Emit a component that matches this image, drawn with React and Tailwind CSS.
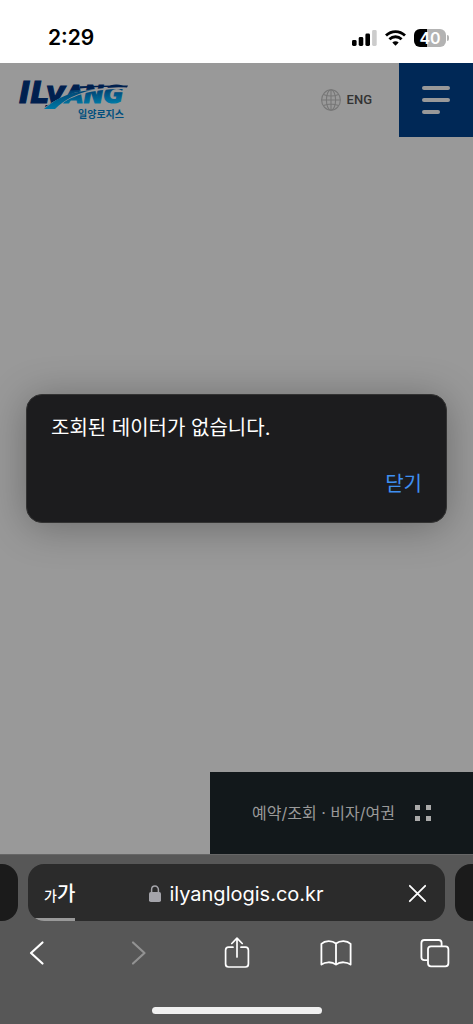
import { useState } from "react";

function Logo() {
  return (
    <svg
      width="112"
      height="44"
      viewBox="0 0 112 44"
      role="img"
      aria-label="ILyANG 일양로지스"
      fontWeight="bold"
    >
      <defs>
        <linearGradient id="letters" gradientUnits="userSpaceOnUse" x1="70" y1="6" x2="71" y2="25">
          <stop offset="0" stopColor="#00204f" />
          <stop offset="0.22" stopColor="#00204f" />
          <stop offset="0.26" stopColor="#003f70" />
          <stop offset="1" stopColor="#0078a4" />
        </linearGradient>
        <linearGradient id="wave" gradientUnits="userSpaceOnUse" x1="0" y1="10" x2="0" y2="30">
          <stop offset="0" stopColor="#00406f" />
          <stop offset="1" stopColor="#0078a4" />
        </linearGradient>
      </defs>
      <text
        x="1"
        y="24"
        fontSize="30"
        fontStyle="oblique"
        fontFamily="'DejaVu Sans', sans-serif"
        fill="#00204f"
        stroke="#00204f"
        strokeWidth="1.2"
      >
        ILy
        <tspan fontSize="24" fill="url(#letters)" stroke="url(#letters)">ANG</tspan>
      </text>
      <path d="M24 31C40 17 60 9 110 8V10C78 9 52 15 36 31Z" fill="#999" />
      <path d="M26 30C38 20 50 13 74 11C58 15 47 20 37 30Z" fill="url(#wave)" />
      <path d="M62 7.2C78 6.2 94 6.4 110 6.4L109 8.4C92 7.6 78 8 62 9.4Z" fill="#00204f" />
      <text x="60" y="39" fontSize="10" fill="#004f7e" fontFamily="'Noto Sans CJK KR', sans-serif">
        일양로지스
      </text>
    </svg>
  );
}

function StatusBar() {
  return (
    <div className="flex h-[63px] items-center justify-between bg-white pt-3 pr-6 pl-12 text-black">
      <span className="text-[21px] font-semibold">2:29</span>
      <div className="flex items-center gap-2">
        <svg width="25" height="16" viewBox="0 0 25 16">
          <rect x="0" y="10" width="4.6" height="6" rx="1.4" />
          <rect x="6.7" y="7" width="4.6" height="9" rx="1.4" />
          <rect x="13.4" y="3.5" width="4.6" height="12.5" rx="1.4" />
          <rect x="20.1" y="0" width="4.6" height="16" rx="1.4" fill="#ccc" />
        </svg>
        <svg width="21" height="16" viewBox="0 0 21 16" fill="none" stroke="#000" strokeWidth="2.8">
          <path d="M1 5.6C6.5 .2 14.5 .2 20 5.6" />
          <path d="M4.4 9.3C8 5.9 13 5.9 16.6 9.3" />
          <path d="M10.5 15.8L7.3 12.5C9.1 10.9 11.9 10.9 13.7 12.5Z" fill="#000" stroke="none" />
        </svg>
        <div className="flex items-center gap-px">
          <div className="flex h-[18px] w-8 items-center justify-center rounded-md bg-linear-to-r from-black from-40% to-[#b3b3b3] to-40% text-base font-semibold text-white">
            40
          </div>
          <div className="h-1.5 w-0.5 rounded-r-full bg-[#b3b3b3]" />
        </div>
      </div>
    </div>
  );
}

function SiteHeader() {
  return (
    <header className="flex items-start justify-between">
      <a href="#home" className="mt-4 ml-[18px]">
        <Logo />
      </a>
      <div className="flex">
        <a
          href="#eng"
          className="mr-[27px] flex items-center gap-1.5 font-[Roboto,sans-serif] text-[13px] font-medium text-[#333]"
        >
          <svg width="20" height="22" viewBox="0 0 20 22" fill="none" stroke="#777" strokeWidth="1.1">
            <ellipse cx="10" cy="11" rx="9.4" ry="10.2" />
            <ellipse cx="10" cy="11" rx="4.6" ry="10.2" />
            <path d="M10 .8V21.2M.6 11H19.4M2.4 5.4C7 7.4 13 7.4 17.6 5.4M2.4 16.6C7 14.6 13 14.6 17.6 16.6" />
          </svg>
          ENG
        </a>
        <button
          aria-label="메뉴"
          className="flex size-[74px] flex-col justify-center gap-2 bg-[#002856] pl-[23px]"
        >
          <span className="h-1 w-7 rounded-full bg-[#999]" />
          <span className="h-1 w-7 rounded-full bg-[#999]" />
          <span className="h-1 w-[18px] rounded-full bg-[#999]" />
        </button>
      </div>
    </header>
  );
}

function AlertDialog({ onClose }) {
  return (
    <div className="absolute inset-0 flex items-center justify-center px-[26px]">
      <div
        role="alertdialog"
        aria-labelledby="alert-message"
        className="flex w-full flex-col rounded-2xl border border-[#333] bg-[#1c1c1e] px-6 pt-4 pb-[21px] shadow-[0_4px_40px_rgba(0,0,0,0.3)]"
      >
        <p id="alert-message" className="text-xl leading-[34px] text-white">
          조회된 데이터가 없습니다.
        </p>
        <button onClick={onClose} className="mt-[22px] self-end text-xl leading-[34px] text-[#3f8ff0]">
          닫기
        </button>
      </div>
    </div>
  );
}

function BrowserBar() {
  return (
    <footer className="border-t border-[#666] bg-[#575757] pt-[9px] pb-2.5 text-white">
      {/* Address bar */}
      <div className="flex gap-2.5">
        <div className="w-[18px] rounded-r-2xl bg-[#1b1b1b]" />
        <div className="relative flex h-[57px] flex-1 items-center justify-between overflow-hidden rounded-2xl bg-[#2b2b2b] px-4 pt-0.5">
          <button aria-label="페이지 설정" className="flex w-8 items-baseline font-medium">
            <span className="text-sm">가</span>
            <span className="text-xl">가</span>
          </button>
          <a href="#address" className="flex items-center gap-2 text-xl">
            <svg width="12" height="17" viewBox="0 0 12 17">
              <path d="M2.6 8V4.6C2.6 -.1 9.4 -.1 9.4 4.6V8" fill="none" stroke="#a4a4aa" strokeWidth="1.5" />
              <rect x="0" y="7" width="12" height="10" rx="1.8" fill="#a4a4aa" />
            </svg>
            ilyanglogis.co.kr
          </a>
          <button aria-label="중지" className="flex w-8 justify-end">
            <svg width="21" height="19" viewBox="0 0 21 19" stroke="#fff" strokeWidth="1.8" strokeLinecap="round">
              <path d="M1.8 1.8L17.2 17.2M17.2 1.8L1.8 17.2" />
            </svg>
          </button>
          <div className="absolute bottom-0 left-0 h-[3px] w-[47px] bg-[#999]" />
        </div>
        <div className="w-[18px] rounded-l-2xl bg-[#1b1b1b]" />
      </div>

      {/* Toolbar */}
      <nav className="mt-4 flex justify-between px-[21px]">
        <button aria-label="뒤로">
          <svg width="32" height="32" viewBox="0 0 32 32" fill="none" stroke="#fff" strokeWidth="2.2" strokeLinecap="round" strokeLinejoin="round">
            <path d="M21.5 5.5L10 16L21.5 26.5" />
          </svg>
        </button>
        <button aria-label="앞으로" disabled>
          <svg width="32" height="32" viewBox="0 0 32 32" fill="none" stroke="#929292" strokeWidth="2.2" strokeLinecap="round" strokeLinejoin="round">
            <path d="M12 5.5L23.5 16L12 26.5" />
          </svg>
        </button>
        <button aria-label="공유">
          <svg width="32" height="32" viewBox="0 0 32 32" fill="none" stroke="#fff" strokeWidth="1.7" strokeLinecap="round" strokeLinejoin="round">
            <path d="M12 10.2H7.6Q4.6 10.2 4.6 13.2V27Q4.6 30 7.6 30H24.4Q27.4 30 27.4 27V13.2Q27.4 10.2 24.4 10.2H20" />
            <path d="M16 20V1.5M10.8 6.5L16 1.2L21.2 6.5" />
          </svg>
        </button>
        <button aria-label="책갈피">
          <svg width="32" height="32" viewBox="0 0 32 32" fill="none" stroke="#fff" strokeWidth="1.8" strokeLinejoin="round">
            <path d="M16 6.5C12 3.3 5 3.3 1.4 6.8V27.6C5 24.6 12 24.4 16 27.6C20 24.4 27 24.6 30.6 27.6V6.8C27 3.3 20 3.3 16 6.5ZM16 6.5V27.6" />
          </svg>
        </button>
        <button aria-label="탭">
          <svg width="32" height="32" viewBox="0 0 32 32" fill="none" stroke="#fff" strokeWidth="1.8">
            <path d="M7.5 23.2H4.4Q1.4 23.2 1.4 20.2V6Q1.4 3 4.4 3H18.6Q21.6 3 21.6 6V9" />
            <rect x="8" y="9.3" width="20.4" height="20" rx="3" />
          </svg>
        </button>
      </nav>

      {/* Home indicator */}
      <div className="mx-auto mt-[38px] h-[7px] w-[170px] rounded-full bg-[#f0f0f0]" />
    </footer>
  );
}

export default function App() {
  const [alertOpen, setAlertOpen] = useState(true);

  return (
    <div className="flex min-h-screen flex-col bg-[#999] font-[Inter,'Noto_Sans_CJK_KR',sans-serif]">
      <StatusBar />
      <main className="relative flex flex-1 flex-col justify-between">
        <SiteHeader />
        <button className="flex h-[82px] items-center gap-5 self-end bg-[#12181b] px-[42px] text-base text-[#999]">
          예약/조회 · 비자/여권
          <span className="grid grid-cols-2 gap-1.5">
            <span className="size-[5px] bg-[#aaa]" />
            <span className="size-[5px] bg-[#aaa]" />
            <span className="size-[5px] bg-[#aaa]" />
            <span className="size-[5px] bg-[#aaa]" />
          </span>
        </button>
        {alertOpen && <AlertDialog onClose={() => setAlertOpen(false)} />}
      </main>
      <BrowserBar />
    </div>
  );
}
